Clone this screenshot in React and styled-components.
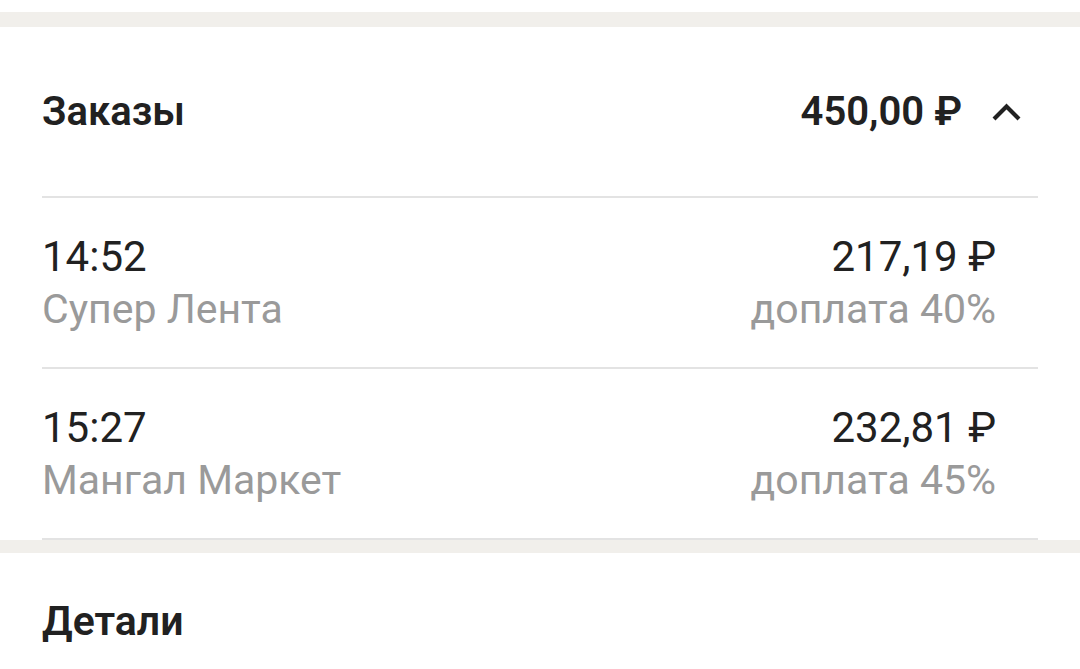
import React from "react";
import styled, { createGlobalStyle } from "styled-components";

const GlobalStyle = createGlobalStyle`
  body {
    margin: 0;
    background: #fff;
    font-family: "Roboto", "Noto Sans", sans-serif;
    color: #212121;
  }
`;

const Page = styled.div`
  width: 1080px;
  display: flex;
  flex-direction: column;
`;

const Band = styled.div`
  height: ${(p) => p.h}px;
  background: ${(p) => (p.grey ? "#f1efeb" : "#fff")};
`;

const Card = styled.section`
  padding: 0 42px;
  background: #fff;
`;

const Header = styled.div`
  height: 169px;
  display: flex;
  align-items: center;
  justify-content: space-between;
  padding-right: 17px;
  border-bottom: 2px solid #e3e3e3;
`;

const Title = styled.h2`
  margin: 0;
  font-size: ${(p) => p.size || 40}px;
  line-height: 52px;
  font-weight: 600;
  color: #212121;
`;

const Total = styled.div`
  display: flex;
  align-items: center;
  gap: 30px;
  font-size: 40px;
  line-height: 52px;
  font-weight: 600;
`;

const Row = styled.div`
  display: flex;
  justify-content: space-between;
  padding: 33px 42px 32px 0;
  border-bottom: 2px solid #e3e3e3;
`;

const Col = styled.div`
  display: flex;
  flex-direction: column;
  align-items: ${(p) => (p.right ? "flex-end" : "flex-start")};
`;

const Main = styled.span`
  font-size: 42px;
  line-height: 52px;
  color: #212121;
`;

const Sub = styled.span`
  font-size: 41px;
  line-height: 52px;
  color: #9a9a9a;
`;

const Details = styled.section`
  padding: 42px 42px 0;
`;

const Chevron = () => (
  <svg width="29" height="18" viewBox="0 0 29 18">
    <polyline
      points="2,16 14.5,3.5 27,16"
      fill="none"
      stroke="#212121"
      strokeWidth="4.2"
    />
  </svg>
);

const orders = [
  { time: "14:52", shop: "Супер Лента", sum: "217,19 ₽", extra: "доплата 40%" },
  { time: "15:27", shop: "Мангал Маркет", sum: "232,81 ₽", extra: "доплата 45%" },
];

export default function App() {
  return (
    <Page>
      <GlobalStyle />
      <Band h={12} />
      <Band h={15} grey />
      <Card>
        <Header>
          <Title>Заказы</Title>
          <Total>
            <span>450,00 ₽</span>
            <Chevron />
          </Total>
        </Header>
        {orders.map((o) => (
          <Row key={o.time}>
            <Col>
              <Main>{o.time}</Main>
              <Sub>{o.shop}</Sub>
            </Col>
            <Col right>
              <Main>{o.sum}</Main>
              <Sub>{o.extra}</Sub>
            </Col>
          </Row>
        ))}
      </Card>
      <Band h={13} grey />
      <Details>
        <Title size={41}>Детали</Title>
      </Details>
    </Page>
  );
}
